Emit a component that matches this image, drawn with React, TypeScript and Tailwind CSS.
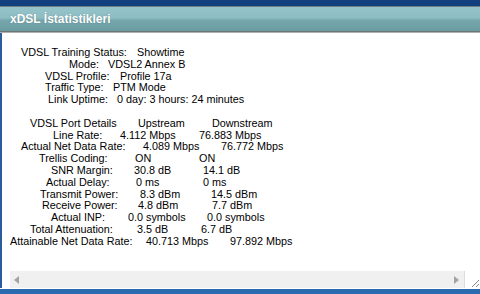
import React from "react";

type Row = { pl: string; cells: [string, string][]; last: string };

const top: Row[] = [
  { pl: "pl-[11px]", cells: [["VDSL Training Status:", "w-[116px]"]], last: "Showtime" },
  { pl: "pl-[59px]", cells: [["Mode:", "w-[39px]"]], last: "VDSL2 Annex B" },
  { pl: "pl-[35px]", cells: [["VDSL Profile:", "w-[75px]"]], last: "Profile 17a" },
  { pl: "pl-[35px]", cells: [["Traffic Type:", "w-[68px]"]], last: "PTM Mode" },
  { pl: "pl-[38px]", cells: [["Link Uptime:", "w-[69px]"]], last: "0 day: 3 hours: 24 minutes" },
];

const port: Row[] = [
  { pl: "pl-[20px]", cells: [["VDSL Port Details", "w-[108px]"], ["Upstream", "w-[74px]"]], last: "Downstream" },
  { pl: "pl-[43px]", cells: [["Line Rate:", "w-[67px]"], ["4.112 Mbps", "w-[79px]"]], last: "76.883 Mbps" },
  { pl: "pl-[11px]", cells: [["Actual Net Data Rate:", "w-[122px]"], ["4.089 Mbps", "w-[78px]"]], last: "76.772 Mbps" },
  { pl: "pl-[29px]", cells: [["Trellis Coding:", "w-[96px]"], ["ON", "w-[64px]"]], last: "ON" },
  { pl: "pl-[41px]", cells: [["SNR Margin:", "w-[83px]"], ["30.8 dB", "w-[69px]"]], last: "14.1 dB" },
  { pl: "pl-[36px]", cells: [["Actual Delay:", "w-[90px]"], ["0 ms", "w-[67px]"]], last: "0 ms" },
  { pl: "pl-[30px]", cells: [["Transmit Power:", "w-[100px]"], ["8.3 dBm", "w-[71px]"]], last: "14.5 dBm" },
  { pl: "pl-[32px]", cells: [["Receive Power:", "w-[96px]"], ["4.8 dBm", "w-[74px]"]], last: "7.7 dBm" },
  { pl: "pl-[41px]", cells: [["Actual INP:", "w-[77px]"], ["0.0 symbols", "w-[79px]"]], last: "0.0 symbols" },
  { pl: "pl-[20px]", cells: [["Total Attenuation:", "w-[107px]"], ["3.5 dB", "w-[64px]"]], last: "6.7 dB" },
  { pl: "pl-[0px]", cells: [["Attainable Net Data Rate:", "w-[136px]"], ["40.713 Mbps", "w-[84px]"]], last: "97.892 Mbps" },
];

function Rows({ rows }: { rows: Row[] }) {
  return (
    <>
      {rows.map((r, i) => (
        <div key={i} className={`flex whitespace-nowrap h-[11.8px] ${r.pl}`}>
          {r.cells.map(([t, w], j) => (
            <span key={j} className={`shrink-0 ${w}`}>
              {t}
            </span>
          ))}
          <span>{r.last}</span>
        </div>
      ))}
    </>
  );
}

export default function App() {
  return (
    <div
      className="w-[480px] h-[294px] flex flex-col bg-white overflow-hidden text-black"
      style={{ fontFamily: '"Liberation Sans", Arial, sans-serif' }}
    >
      <div className="h-[6px] bg-[#123f7e] shrink-0" />
      <div className="h-[1px] bg-[#6f7d8a] shrink-0" />
      <div className="h-[24px] shrink-0 flex items-center pl-[10px] text-white font-bold text-[12px] bg-[linear-gradient(to_bottom,#95c4cb_0%,#8dbdc3_45%,#74a6ab_55%,#6a9ca1_100%)] [text-shadow:0_0_1px_rgba(60,90,95,0.6)]">
        xDSL İstatistikleri
      </div>
      <div className="h-[1px] bg-[#6e7777] shrink-0" />
      <div className="h-[1px] bg-[#b0b0b0] shrink-0" />
      <div className="flex-1 flex border-l-2 border-[#2a5d9a] min-h-0">
        <div className="w-[8px] shrink-0" />
        <div className="flex-1 flex flex-col min-w-0">
          <div className="flex-1 pt-[14px] text-[10.8px] leading-[11.8px]">
            <Rows rows={top} />
            <div className="h-[11.8px]" />
            <Rows rows={port} />
          </div>
          <div className="h-[17px] shrink-0 flex">
            <div className="flex-1 bg-[#f0f0f0] flex items-center justify-between pl-[4px] pr-[5px]">
              <svg width="5" height="8" viewBox="0 0 5 8">
                <path d="M5 0 L0 4 L5 8 Z" fill="#a3a3a3" />
              </svg>
              <svg width="5" height="8" viewBox="0 0 5 8">
                <path d="M0 0 L5 4 L0 8 Z" fill="#a3a3a3" />
              </svg>
            </div>
            <div className="w-[16px] shrink-0 bg-white border-l border-[#dcdcdc] flex items-end justify-end">
              <svg width="10" height="10" viewBox="0 0 10 10">
                <path d="M9 2 L2 9 M9 6 L6 9" stroke="#8a8a8a" strokeWidth="1" />
              </svg>
            </div>
          </div>
        </div>
      </div>
      <div className="h-[1px] bg-white shrink-0" />
      <div className="h-[5px] bg-[#2a6bb0] shrink-0" />
    </div>
  );
}
